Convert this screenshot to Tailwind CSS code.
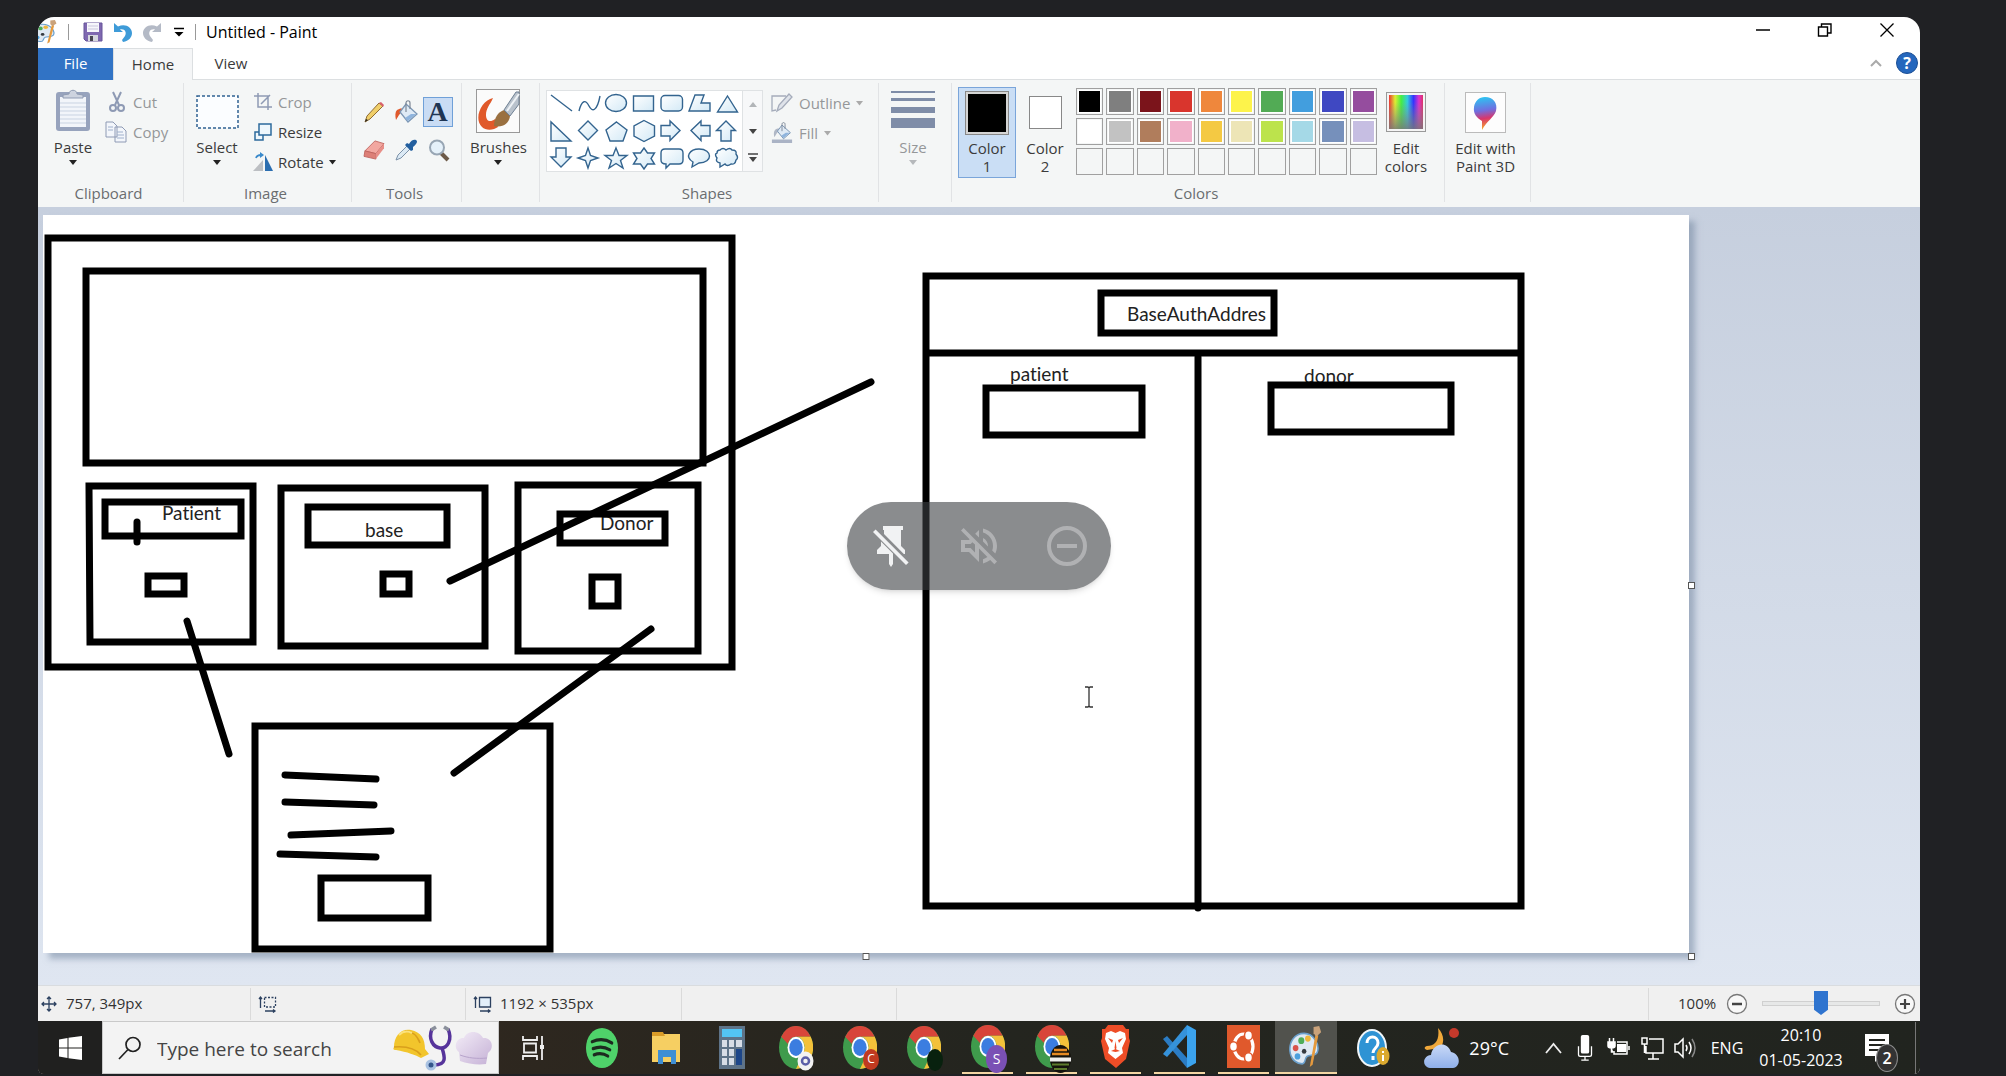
<!DOCTYPE html>
<html lang="en">
<head>
<meta charset="utf-8">
<title>Untitled - Paint</title>
<script src="https://cdn.jsdelivr.net/npm/@tailwindcss/browser@4"></script>
</head>
<body class="h-screen overflow-hidden bg-[#202124] pt-[17px] pr-[86px] pb-[2px] pl-[38px] font-['Open_Sans','Noto_Sans',sans-serif] text-sm text-[#3b3b3b]">

<svg class="absolute size-0" aria-hidden="true">
  <defs>
    <linearGradient id="shapeFill" x1="0" y1="0" x2="1" y2="1"><stop offset="0" stop-color="#fff"/><stop offset="1" stop-color="#d3e9f6"/></linearGradient>
    <linearGradient id="spectrum"><stop offset="0" stop-color="#e33"/><stop offset=".18" stop-color="#de3"/><stop offset=".36" stop-color="#4e4"/><stop offset=".54" stop-color="#3cd"/><stop offset=".72" stop-color="#33f"/><stop offset=".88" stop-color="#d3c"/><stop offset="1" stop-color="#d36"/></linearGradient>
    <linearGradient id="greyFade" x1="0" y1="0" x2="0" y2="1"><stop offset=".2" stop-color="#888" stop-opacity="0"/><stop offset="1" stop-color="#777" stop-opacity=".85"/></linearGradient>
    <linearGradient id="p3d" x1=".4" y1="0" x2=".5" y2="1"><stop offset="0" stop-color="#2cc5f2"/><stop offset=".4" stop-color="#6f6fe0"/><stop offset=".65" stop-color="#d8366c"/><stop offset="1" stop-color="#fbb324"/></linearGradient>
    <linearGradient id="cloud" x1="0" y1="0" x2="0" y2="1"><stop offset="0" stop-color="#c9d9f7"/><stop offset="1" stop-color="#8fb0ea"/></linearGradient>
    <linearGradient id="hat" x1="0" y1="0" x2="1" y2="1"><stop offset="0" stop-color="#f3ecf7"/><stop offset="1" stop-color="#c5b1d6"/></linearGradient>
    <symbol id="chrome" viewBox="0 0 48 48" preserveAspectRatio="none">
      <circle cx="24" cy="24" r="24" fill="#3f9b4c"/>
      <path d="M3.2 12A24 24 0 0 1 44.8 12H24A12 12 0 0 0 12.6 20z" fill="#d8453a"/>
      <path d="M44.800 12A24 24 0 0 1 24 48l10.400-18A12 12 0 0 0 24 12z" fill="#f3c13a"/>
      <circle cx="24" cy="24" r="12" fill="#fff"/><circle cx="24" cy="24" r="9.500" fill="#3b7de0"/>
    </symbol>
    <symbol id="palette" viewBox="0 0 36 40" preserveAspectRatio="none">
      <path d="M16 7C6 7 0 15 1 24s8 12 13 12c4 0 2-5 5-7s9 0 11-4c3-7-4-18-14-18z" fill="#dfe9f3" stroke="#6ba0cc" stroke-width="1.600"/>
      <circle cx="7" cy="21" r="3" fill="#d9534b"/><circle cx="13" cy="14" r="3.200" fill="#4fae5a"/><circle cx="20" cy="12" r="3" fill="#efb73c"/><circle cx="9" cy="29" r="3" fill="#4b9fdd"/><circle cx="16" cy="24" r="2.400" fill="#353a40"/>
      <path d="M28 8l3 1-6 28-3 2z" fill="#e59a3e"/><path d="M26 1l6-1 2 6-5 4-3-3z" fill="#caa27a"/>
    </symbol>
    <symbol id="bucket" viewBox="0 0 24 24">
      <path d="M3 10C1 12 1 16 2 20l3-5 5-6c-3-1-5 0-7 1z" fill="currentColor"/>
      <path d="M12 4l11 10-9 8L6 12z" fill="#dfeaf5" stroke="#7c97b5" stroke-width="1.300"/><path d="M12 12V3c0-3 4-3 4 0v6" fill="none" stroke="#7c8796" stroke-width="1.200"/><path d="M17 14l5 0-8 7-3-3z" fill="#8fb4dd"/>
    </symbol>
  </defs>
</svg>

<div class="flex h-full flex-col overflow-hidden rounded-t-2xl rounded-b-md bg-white">

  <!-- title bar -->
  <header class="flex h-[31px] shrink-0 items-center pb-[2px] text-black">
    <svg class="h-6 w-5" viewBox="10 0 26 40" preserveAspectRatio="none" aria-hidden="true"><use href="#palette" width="36" height="40"/></svg>
    <span class="ml-[10px] h-4 w-px bg-[#999]"></span>
    <button class="ml-[14px]" aria-label="Save"><svg width="20" height="20" viewBox="0 0 20 20"><path d="M1 1h18v18H3l-2-2z" fill="#7f68b0" stroke="#67549a"/><path d="M4 1h12v9H4z" fill="#f6f6fb"/><path d="M5 4h10M5 7h10" stroke="#c9c6dd"/><path d="M5 13h10v6H5z" fill="#d5d7de"/><path d="M7 14h3v5H7z" fill="#47454f"/></svg></button>
    <button class="ml-[10px]" aria-label="Undo"><svg width="20" height="20" viewBox="0 0 20 20"><path d="M1 1v9h9L7 7.500c5-1 7 3 5 6.500l-3 4 1 2c6-1 9-5 9-9 0-6-7-10-14-6.500z" fill="#3e9bd8"/></svg></button>
    <button class="ml-[9px]" aria-label="Redo"><svg width="20" height="20" viewBox="0 0 20 20"><path d="M19 1v9h-9l3-2.500c-5-1-7 3-5 6.500l3 4-1 2c-6-1-9-5-9-9 0-6 7-10 14-6.500z" fill="#b4bac6"/></svg></button>
    <button class="ml-[11px]" aria-label="Customize quick access toolbar"><svg width="12" height="10" viewBox="0 0 12 10"><path d="M1 1.500h10" stroke="#000" stroke-width="1.600"/><path d="M1.500 5h9L6 9.500z"/></svg></button>
    <span class="ml-[10px] h-4 w-px bg-[#999]"></span>
    <h1 class="ml-[10px] text-base">Untitled - Paint</h1>
    <div class="ml-auto flex h-full items-center pr-[2px] pb-1">
      <button class="flex w-[62px] justify-center" aria-label="Minimize"><svg width="16" height="16" viewBox="0 0 16 16"><path d="M1 8h14" stroke="#000" stroke-width="1.300"/></svg></button>
      <button class="flex w-[62px] justify-center" aria-label="Restore"><svg width="16" height="16" viewBox="0 0 16 16" fill="none" stroke="#000" stroke-width="1.400"><path d="M1.500 5h9v9h-9zM4.500 5V2h9.500v9h-3.500"/></svg></button>
      <button class="flex w-[62px] justify-center" aria-label="Close"><svg width="16" height="16" viewBox="0 0 16 16"><path d="M1.500 1.500l13 13M14.500 1.500l-13 13" stroke="#000" stroke-width="1.300"/></svg></button>
    </div>
  </header>

  <!-- ribbon tabs -->
  <nav class="flex h-8 shrink-0 items-stretch text-[15px]" aria-label="Ribbon tabs">
    <button class="w-[75px] bg-[#3173c5] text-white">File</button>
    <button class="w-20 border-x border-t border-[#dcdfe1] bg-[#f5f6f7]">Home</button>
    <button class="w-[76px] border-b border-[#dcdfe1]">View</button>
    <div class="flex flex-1 items-center justify-end gap-[14px] border-b border-[#dcdfe1] pr-[2px] pb-[2px]">
      <button aria-label="Minimize the ribbon"><svg width="12" height="8" viewBox="0 0 12 8"><path d="M1 7l5-5 5 5" fill="none" stroke="#aaa" stroke-width="2"/></svg></button>
      <button aria-label="Help" class="size-[22px] rounded-full border border-[#1c4f95] bg-[#2567bd] text-base leading-5 font-bold text-white">?</button>
    </div>
  </nav>

  <!-- ribbon -->
  <div class="flex h-[127px] shrink-0 bg-[#f4f6f6] pt-[3px] pb-[5px] text-[15px] leading-[18px]">
    <section class="flex w-[146px] flex-col border-r border-[#e1e3e5]" aria-label="Clipboard">
      <div class="flex flex-1 pt-[6px]">
        <button class="ml-[10px] flex w-[50px] flex-col items-center">
          <svg width="36" height="43" viewBox="0 0 36 43"><rect x="1" y="3" width="34" height="39" rx="3" fill="#97a3bd"/><path d="M5 8h26v30H5z" fill="#f2f5fa"/><path d="M5 14h26M5 18h26M5 22h26M5 26h26M5 30h26M5 34h26" stroke="#c9d3e2"/><path d="M8 9V6l6-1c0-5 8-5 8 0l6 1v3z" fill="#cdd3df" stroke="#8f9bb2"/></svg>
          <span class="mt-[6px]">Paste</span>
          <svg class="mt-1" width="8" height="5"><path d="M0 0h8L4 5z" fill="#222"/></svg>
        </button>
        <div class="ml-[7px] flex flex-col gap-1 text-[#949799]">
          <button class="flex h-[26px] items-center gap-1"><svg width="24" height="22" viewBox="0 0 24 22" fill="none" stroke="#8e9ab4" stroke-width="2"><path d="M8 1l6 13M16 1l-6 13"/><circle cx="8" cy="17" r="3"/><circle cx="16" cy="17" r="3"/></svg>Cut</button>
          <button class="flex h-[26px] items-center gap-1"><svg width="24" height="22" viewBox="0 0 24 22" fill="#f3f6fb" stroke="#8e9ab4"><path d="M1 1h7l4 4v11H1zM10 6h7l4 4v11H10z"/><path d="M3 6h5M3 9h5M12 11h6M12 14h7M12 17h7" stroke="#9fb0cc"/></svg>Copy</button>
        </div>
      </div>
      <h2 class="pr-1 text-center text-[#6a6d70]">Clipboard</h2>
    </section>

    <section class="flex w-[168px] flex-col border-r border-[#e1e3e5]" aria-label="Image">
      <div class="flex flex-1 pt-[6px]">
        <button class="ml-[7px] flex w-[52px] flex-col items-center pt-[6px]">
          <svg width="43" height="34"><rect x="1" y="1" width="41" height="32" fill="#fbfdff" stroke="#2f6192" stroke-width="1.500" stroke-dasharray="3 2"/></svg>
          <span class="mt-[9px]">Select</span>
          <svg class="mt-1" width="8" height="5"><path d="M0 0h8L4 5z" fill="#222"/></svg>
        </button>
        <div class="ml-[10px] flex flex-col gap-1">
          <button class="flex h-[26px] items-center gap-[5px] text-[#949799]"><svg width="20" height="20" viewBox="0 0 20 20" fill="none" stroke="#8e9ab4" stroke-width="1.500"><path d="M5 1v14h14M1 4h14v14M8 12l9-9"/></svg>Crop</button>
          <button class="flex h-[26px] items-center gap-[5px]"><svg width="20" height="20" viewBox="0 0 20 20" fill="#eff7fc" stroke="#2c6a9c" stroke-width="1.500"><path d="M2 10h8v8H2z"/><path d="M6 2h12v11H6z"/></svg>Resize</button>
          <button class="flex h-[26px] items-center gap-[5px]"><svg width="20" height="20" viewBox="0 0 20 20"><path d="M10 8v11H0z" fill="#bcbfc3"/><path d="M12 3l8 16h-8z" fill="#2b6eb0"/><path d="M3 6c1-3 3-3 5-3" fill="none" stroke="#3a8acb" stroke-width="1.800"/><path d="M7 0l4 3-4 3z" fill="#3a8acb"/></svg>Rotate <svg width="7" height="5"><path d="M0 0h7L3.500 4.500z" fill="#222"/></svg></button>
        </div>
      </div>
      <h2 class="pr-1 text-center text-[#6a6d70]">Image</h2>
    </section>

    <section class="flex w-[110px] flex-col border-r border-[#e1e3e5]" aria-label="Tools">
      <div class="grid flex-1 grid-cols-3 content-start gap-y-2 px-[6px] pt-[14px]">
        <button class="grid h-[30px] place-items-center" aria-label="Pencil"><svg width="21" height="22" viewBox="0 0 21 22"><path d="M1 21l2-6L15 2l4 3L6 18z" fill="#f0cf6a" stroke="#8f6c33"/><path d="M15 2l2-1 3 3-1 2z" fill="#d9606c"/><path d="M1 21l1-3 2 1z" fill="#222"/></svg></button>
        <button class="grid h-[30px] place-items-center text-[#e0592c]" aria-label="Fill with color"><svg width="24" height="24"><use href="#bucket"/></svg></button>
        <button class="size-[30px] border border-[#6fa0d8] bg-[#c9dcf4] font-['Liberation_Serif',serif] text-[28px] leading-7 font-bold text-[#1f3553]" aria-label="Text">A</button>
        <button class="grid h-[30px] place-items-center" aria-label="Eraser"><svg width="22" height="20" viewBox="0 0 24 22"><path d="M13 1l10 3-9 11-12-3z" fill="#f2a7a0" stroke="#c0655f"/><path d="M2 12l12 3v6L1 18z" fill="#dd7f77" stroke="#c0655f"/><path d="M14 15l9-11v5l-9 12z" fill="#e88f88"/></svg></button>
        <button class="grid h-[30px] place-items-center" aria-label="Color picker"><svg width="22" height="22" viewBox="0 0 22 22"><path d="M1 21l2-5 9-9 3 3-9 9z" fill="#dceaf5" stroke="#7c92a8"/><path d="M10 6l2-2 2 1c2-4 5-5 7-4s1 4-3 7l0 3-2 1z" fill="#225f9f"/></svg></button>
        <button class="grid h-[30px] place-items-center" aria-label="Magnifier"><svg width="22" height="23" viewBox="0 0 22 23"><path d="M13 14l7 7" stroke="#6d5a48" stroke-width="4"/><circle cx="9" cy="8.500" r="7" fill="#e5f1fa" stroke="#98a6b4" stroke-width="2"/></svg></button>
      </div>
      <h2 class="pr-1 text-center text-[#6a6d70]">Tools</h2>
    </section>

    <section class="flex w-[78px] justify-center border-r border-[#e1e3e5] pt-[6px] pr-1" aria-label="Brushes">
      <button class="flex flex-col items-center self-start">
        <svg width="44" height="44" viewBox="0 0 44 44"><rect x=".5" y=".5" width="43" height="43" fill="#fbfbfb" stroke="#999"/><path d="M17 9C6 11-3 29 6 38c4 4 12 3 16 0l-3-8c-5 4-9 2-9-4 0-7 4-10 7-17z" fill="#e0592a"/><path d="M18 37c0-8 4-14 10-16l6 6c-1 8-8 12-16 10z" fill="#9a7040"/><path d="M28 21L40 3h3v12l-9 12z" fill="#b9c2cc" stroke="#6d7f93"/><path d="M31 22L43 5" stroke="#eef2f6" stroke-width="2"/></svg>
        <span class="mt-[5px]">Brushes</span>
        <svg class="mt-1" width="8" height="5"><path d="M0 0h8L4 5z" fill="#222"/></svg>
      </button>
    </section>

    <section class="flex w-[339px] flex-col border-r border-[#e1e3e5]" aria-label="Shapes">
      <div class="flex flex-1 pt-[7px] pl-[6px]">
        <div class="flex h-[82px] w-[217px] border border-[#dfe2e4] bg-white">
          <svg class="flex-1" width="195" height="80" viewBox="0 0 195 80" fill="url(#shapeFill)" stroke="#33648f" stroke-width="1.400" role="img" aria-label="Shape gallery">
            <path d="M4 4l21 16"/><path d="M32 20c3-12 7-11 10-5s8 6 11-10" fill="none"/><ellipse cx="69" cy="12" rx="10.500" ry="8.500"/><path d="M86.500 5h20v15h-20z"/><rect x="114" y="4.500" width="21.500" height="15.500" rx="4"/><path d="M148 4h9l-3 8h9v8h-21z"/><path d="M180.500 5l10 16h-20z"/>
            <path d="M4 31v19h20z"/><path d="M41 30l9.500 9.500L41 49l-9.500-9.500z"/><path d="M69.500 31L80 39l-4 11H63l-4-11z"/><path d="M97 29.500l10.500 5.500v10L97 50.500 87 45V35z"/><path d="M114 34.500h9V30l10 9.500-10 10V45h-9z"/><path d="M163 34.500h-9V30l-10 9.500 10 10V45h9z"/><path d="M179 30l9.500 9.500H184V50h-10V39.500h-4.500z"/>
            <path d="M9 57h10v9h5L14 76 4 66h5z"/><path d="M41 57l2.500 7.500L51 67l-7.500 2.500L41 77l-2.500-7.500L31 67l7.500-2.500z"/><path d="M69 57l3 7.500h8l-6.500 5 2.500 7.500-7-4.500-7 4.500 2.500-7.500-6.500-5h8z"/><path d="M97 57l3.500 5h7L104 67.500l3.500 5.500h-7L97 78l-3.500-5h-7l3.500-5.500-3.500-5.500h7z"/><path d="M118 58h14q4 0 4 4v7q0 4-4 4h-9l-4 4v-4q-5 0-5-4v-7q0-4 4-4z"/><path d="M152 58c14 0 14 14 0 14l-7 4 1-5c-9-5-3-13 6-13z"/><path d="M173 59q3-3 6 0 4-3 6 0 5 0 4 4 3 4 0 6-1 5-5 4-4 3-6 0l-5 3 0-4q-5-1-3-5-3-4 0-5 0-3 3-3z"/>
          </svg>
          <div class="flex w-5 flex-col border-l border-[#dfe2e4] bg-[#f7f8f9]">
            <button class="grid flex-1 place-items-center" aria-label="Scroll shapes up"><svg width="8" height="5"><path d="M0 5h8L4 0z" fill="#b2b5b8"/></svg></button>
            <button class="grid flex-1 place-items-center" aria-label="Scroll shapes down"><svg width="8" height="5"><path d="M0 0h8L4 5z" fill="#444"/></svg></button>
            <button class="grid flex-1 place-items-center" aria-label="More shapes"><svg width="10" height="9"><path d="M0 1h10" stroke="#444" stroke-width="1.500"/><path d="M1 4h8L5 9z" fill="#444"/></svg></button>
          </div>
        </div>
        <div class="ml-2 flex flex-col gap-1 text-[#949799]">
          <button class="flex h-[26px] items-center gap-[6px]"><svg width="22" height="22" viewBox="0 0 22 22" fill="none" stroke="#a5acbb" stroke-width="1.300"><path d="M15 4H1v15l4-1"/><path d="M6 19l2-6L18 2l3 3L11 16z" fill="#dfe3ea"/></svg>Outline <svg width="7" height="5"><path d="M0 0h7L3.500 4.500z" fill="#aaa"/></svg></button>
          <button class="flex h-[26px] items-center gap-[6px] text-[#b0b8c6]"><svg width="22" height="22" viewBox="0 0 24 24"><path d="M1 19h22v4H1z" fill="#aab3c5"/><use href="#bucket" width="22" height="20" x="1"/></svg><span class="text-[#949799]">Fill</span> <svg width="7" height="5"><path d="M0 0h7L3.500 4.500z" fill="#aaa"/></svg></button>
        </div>
      </div>
      <h2 class="pr-1 text-center text-[#6a6d70]">Shapes</h2>
    </section>

    <section class="flex w-[73px] justify-center border-r border-[#e1e3e5] pt-[6px] pr-1" aria-label="Size">
      <button class="flex flex-col items-center self-start text-[#949799]">
        <svg width="44" height="44" fill="#7f8da8"><path d="M0 2h44v2H0zM0 9h44v3H0zM0 18h44v6H0zM0 29h44v10H0z"/></svg>
        <span class="mt-[5px]">Size</span>
        <svg class="mt-1" width="8" height="5"><path d="M0 0h8L4 5z" fill="#b5b8bb"/></svg>
      </button>
    </section>

    <section class="flex w-[493px] flex-col border-r border-[#e1e3e5]" aria-label="Colors">
      <div class="flex flex-1 items-start pt-1 pl-[6px]">
        <button class="flex h-[91px] w-[58px] flex-col items-center border border-[#7aa5da] bg-[#cadef5] pt-[3px]">
          <span class="size-11 border border-[#888] bg-black outline-2 -outline-offset-3 outline-[#d5d5d5]"></span>
          <span class="mt-1">Color<br>1</span>
        </button>
        <button class="flex w-[58px] flex-col items-center pt-[9px]">
          <span class="h-[33px] w-[33px] border border-[#888] bg-white"></span>
          <span class="mt-[10px]">Color<br>2</span>
        </button>
        <div id="palette-grid" class="mt-px ml-[2px] grid w-[301px] grid-cols-10 gap-[3px]"></div>
        <button class="ml-[2px] flex w-[54px] flex-col items-center pt-[5px]">
          <svg width="40" height="40"><rect x=".5" y=".5" width="39" height="39" fill="#f4f4f4" stroke="#999"/><path d="M3 3h34v34H3z" fill="url(#spectrum)"/><path d="M3 3h34v34H3z" fill="url(#greyFade)"/></svg>
          <span class="mt-[7px]">Edit<br>colors</span>
        </button>
      </div>
      <h2 class="pr-1 text-center text-[#6a6d70]">Colors</h2>
    </section>

    <section class="flex w-[86px] justify-center border-r border-[#e1e3e5] pt-[9px] pr-1" aria-label="Paint 3D">
      <button class="flex flex-col items-center self-start">
        <svg width="41" height="41"><rect x=".5" y=".5" width="40" height="40" fill="#fdfdfd" stroke="#bbb"/><path d="M20 5c8 0 13 6 11 14-2 6-9 10-14 19l0-9C12 26 8 22 9 15c1-6 5-10 11-10z" fill="url(#p3d)"/></svg>
        <span class="mt-[6px]">Edit with<br>Paint 3D</span>
      </button>
    </section>
  </div>

  <!-- work area -->
  <main class="relative flex min-h-0 flex-1 flex-col overflow-hidden bg-linear-to-b from-[#c6cfde] to-[#dfe6f1] pt-2 pl-[5px]">
    <div class="relative h-[738px] w-[1646px] shrink-0 bg-white shadow-[6px_6px_6px_rgba(110,130,155,0.5)]">
      <svg class="block" width="1646" height="738" viewBox="43 215 1646 738" role="img" aria-label="Wireframe sketch">
        <g class="text-[19px] [font-variant-ligatures:none]" font-family="Lato, sans-serif" fill="#222">
          <text x="162" y="520">Patient</text>
          <text x="365" y="537">base</text>
          <text x="600" y="530">Donor</text>
          <text x="1127" y="321">BaseAuthAddres</text>
          <text x="1010" y="381">patient</text>
          <text x="1304" y="383">donor</text>
        </g>
        <g fill="none" stroke="#000" stroke-width="7">
          <path d="M48 238h684v429H48zM86 271h617v192H86z"/>
          <path d="M89 486h164v156H90zM105 502h136v34H105zM148 576h36v18h-36z"/>
          <path d="M281 488h204v158H281zM308 507h139v38H308zM383 574h26v20h-26z"/>
          <path d="M518 485h180v166H518zM560 514h105v29H560zM592 577h26v29h-26z"/>
          <path d="M255 726h295v223H255zM321 878h107v40H321z"/>
          <path d="M926 276h595v630H926zM1101 293h173v40h-173zM926 353h595M986 388h156v47H986zM1271 385h180v47h-180z"/>
        </g>
        <g fill="none" stroke="#000" stroke-width="7" stroke-linecap="round">
          <path d="M1198 357v551M137 522v20M450 581L871 382M187 621l42 133M651 629L454 773"/>
          <path d="M285 775L376 779M285 802L374 805M291 835L391 831M280 854L376 857"/>
        </g>
        <path d="M1085 687h3l1 1 1-1h3M1089 688v18M1085 707h3l1-1 1 1h3" fill="none" stroke="#333" stroke-width="1.300"/>
      </svg>
      <span class="absolute top-[367px] -right-[6px] size-[7px] border border-[#555] bg-white"></span>
      <span class="absolute -right-[6px] -bottom-[7px] size-[7px] border border-[#555] bg-white"></span>
      <span class="absolute -bottom-[7px] left-1/2 size-[7px] -translate-x-1/2 border border-[#555] bg-white"></span>
    </div>

    <!-- call controls floating over the shared screen -->
    <div class="absolute top-[295px] left-[809px] flex h-[88px] w-[264px] items-center justify-around rounded-full bg-[#3c4043]/60 shadow-md">
      <button aria-label="Unpin"><svg width="48" height="48" viewBox="0 0 24 24" fill="#f1f2f3"><path d="M8 2h10v2h-1v8l2 2v2h-.6L8.500 6V4H8zM7 9.700V12l-2 2v2h6v5l1 1.500 1-1.500v-5.200z"/><path d="M3 5l1.300-1.300L20.800 20.200l-1.300 1.300z"/></svg></button>
      <button aria-label="Mute"><svg width="48" height="48" viewBox="0 0 24 24" fill="#b0b1b3"><path d="M4.300 3L3 4.300 7.300 8.600 7 9H3v6h4l5 5v-6.700l4.200 4.200c-.7.500-1.400.9-2.200 1.100v2.100c1.300-.3 2.600-.9 3.600-1.700l2.100 2.100 1.300-1.300zM10 15.200L7.800 13H5v-2h2.800l.9-.9L10 11.300zM19 12c0 .8-.1 1.600-.4 2.300l1.500 1.500c.6-1.100.9-2.400.9-3.800 0-4.300-3-7.900-7-8.800v2.100c2.900.9 5 3.500 5 6.700zM12 4L10.100 5.900 12 7.800zM16.500 12c0-1.800-1-3.300-2.500-4v1.800l2.500 2.500z"/></svg></button>
      <button aria-label="Remove"><svg width="48" height="48" viewBox="0 0 24 24" fill="none" stroke="#b0b1b3" stroke-width="2"><circle cx="12" cy="12" r="9"/><path d="M7 12h10"/></svg></button>
    </div>
  </main>

  <!-- status bar -->
  <footer class="flex h-9 shrink-0 items-center border-t border-[#d9dcdf] bg-[#f0f0f0] text-[15px] text-[#333]">
    <div class="flex h-8 w-[213px] items-center gap-[9px] border-r border-[#dadada] pl-[3px]"><svg width="16" height="16" viewBox="0 0 16 16" fill="none" stroke="#2c4160" stroke-width="1.300"><path d="M8 1v14M1 8h14M6 3l2-2 2 2M6 13l2 2 2-2M3 6L1 8l2 2M13 6l2 2-2 2"/></svg>757, 349px</div>
    <div class="flex h-8 w-[215px] items-center border-r border-[#dadada] pl-[7px]"><svg width="19" height="18" viewBox="0 0 19 18" fill="none" stroke="#2c4160" stroke-width="1.300"><path d="M2.500 13V2M1 4l1.500-2L4 4M7 16h10M15 14.500l2 1.500-2 1.500"/><path d="M6.500 2.500h11v9.500h-11z" stroke-dasharray="2 1.500"/></svg></div>
    <div class="flex h-8 w-[216px] items-center gap-[8px] border-r border-[#dadada] pl-[7px]"><svg width="19" height="18" viewBox="0 0 19 18" fill="none" stroke="#2c4160" stroke-width="1.300"><path d="M2.500 13V2M1 4l1.500-2L4 4M7 16h10M15 14.500l2 1.500-2 1.500"/><path d="M6.500 2.500h11v9.500h-11z" fill="#e2effa"/></svg>1192 × 535px</div>
    <div class="h-8 w-[215px] border-r border-[#dadada]"></div>
    <div class="ml-auto flex h-8 w-[272px] items-center border-l border-[#dadada] pr-1 pl-[29px]">
      <label for="zoom" class="w-12">100%</label>
      <button aria-label="Zoom out"><svg width="22" height="22" viewBox="0 0 22 22"><circle cx="11" cy="11" r="9.500" fill="#f8f8f8" stroke="#777" stroke-width="1.300"/><path d="M6 11h10" stroke="#444" stroke-width="2.500"/></svg></button>
      <input id="zoom" type="range" value="50" class="mx-[14px] h-6 min-w-0 flex-1 appearance-none bg-transparent [&::-webkit-slider-runnable-track]:h-[5px] [&::-webkit-slider-runnable-track]:border [&::-webkit-slider-runnable-track]:border-[#d0d0d0] [&::-webkit-slider-runnable-track]:bg-[#e7e8e8] [&::-webkit-slider-thumb]:-mt-[11px] [&::-webkit-slider-thumb]:h-6 [&::-webkit-slider-thumb]:w-[14px] [&::-webkit-slider-thumb]:appearance-none [&::-webkit-slider-thumb]:bg-[#2f74cf] [&::-webkit-slider-thumb]:[clip-path:polygon(0_0,100%_0,100%_78%,50%_100%,0_78%)]">
      <button aria-label="Zoom in"><svg width="22" height="22" viewBox="0 0 22 22"><circle cx="11" cy="11" r="9.500" fill="#f8f8f8" stroke="#777" stroke-width="1.300"/><path d="M6 11h10M11 6v10" stroke="#444" stroke-width="2.200"/></svg></button>
    </div>
  </footer>

  <!-- taskbar -->
  <div class="flex h-[53px] shrink-0 items-stretch bg-linear-to-r from-[#37291f] via-[#24251f] to-[#21241f] text-[17px] text-white">
    <button class="grid w-16 place-items-center bg-[#20201f]" aria-label="Start"><svg width="24" height="24" viewBox="0 0 24 24" fill="#fff"><path d="M1 3.500l8.500-1.500v9.500H1zM10.500 1.800L24 0v11.500H10.500zM1 12.500h8.500V22L1 20.500zM10.500 12.500H24V24l-13.500-1.800z"/></svg></button>
    <label class="flex w-[397px] items-center border border-[#c9c9c9] bg-[#f3f3f3]">
      <svg class="ml-[15px]" width="24" height="24" viewBox="0 0 24 24" fill="none" stroke="#222" stroke-width="1.700"><circle cx="15" cy="8.500" r="7"/><path d="M10 13.500L1 23"/></svg>
      <input type="text" placeholder="Type here to search" class="ml-[15px] min-w-0 flex-1 bg-transparent pt-1 text-[19px] text-[#333] placeholder:text-[#444]">
      <svg width="106" height="48" viewBox="0 0 106 48">
        <path d="M2 23C2 12 9 4 19 6c10 2 14 9 14 19l4 5-8 4c-5-3-14-6-25-8-3 0-3-1-2-3z" fill="#f2c52c"/><path d="M13 7c6 0 12 4 15 12M2 23c12-1 22 2 27 8" fill="none" stroke="#d99f1c" stroke-width="1.600"/><path d="M7 11c4-4 9-4 13-2" fill="none" stroke="#fbe27c" stroke-width="2"/>
        <path d="M40 5c-4 10 1 18 8 19s13-8 8-19M50 24c3 9 5 17-8 17" fill="none" stroke="#56349b" stroke-width="3.500"/><path d="M39 6l5-3M57 6l-5-3" stroke="#8a8f9b" stroke-width="3.500"/><circle cx="39" cy="41" r="5.500" fill="#a9c2e2"/><circle cx="39" cy="41" r="2.500" fill="#33568b"/>
        <path d="M68 37l-1-9c-6-4-3-15 5-14 3-8 15-8 19 0 9-1 12 10 5 15l-2 11c-8 1-18 0-26-3z" fill="url(#hat)"/><path d="M68 31c8 3 17 4 27 3" fill="none" stroke="#b7a3cb"/>
      </svg>
    </label>
    <nav class="flex" aria-label="Taskbar apps">
      <button class="grid w-[69px] place-items-center" aria-label="Task view"><svg width="25" height="26" viewBox="0 0 25 26" fill="none" stroke="#eee" stroke-width="1.800"><path d="M2 1v4h14V1M2 25v-4h14v4M3 8.500h12v9H3zM21 1v24"/><path d="M19 10h4v4h-4z" fill="#eee" stroke="none"/></svg></button>
      <button class="ml-[2px] grid w-16 place-items-center" aria-label="Spotify"><svg width="32" height="40" viewBox="0 0 32 32" preserveAspectRatio="none"><circle cx="16" cy="16" r="16" fill="#4fd26a"/><path d="M6 11c7-2.500 14-2 20 1M7 16.500c6-2 12-1.500 17 1M8 21.500c5-1.500 10-1 14 1" fill="none" stroke="#1d2a1f" stroke-width="2.600" stroke-linecap="round"/></svg></button>
      <button class="grid w-16 place-items-center" aria-label="File Explorer"><svg width="31" height="32" viewBox="0 0 31 32"><path d="M1 2h28v28H1z" fill="#f6cf62"/><path d="M1 0h11l2 4H1z" fill="#d99c28"/><path d="M7 32V18h18v14h-5v-7h-8v7z" fill="#3f8fd4"/></svg></button>
      <button class="ml-[2px] grid w-16 place-items-center" aria-label="Calculator"><svg width="26" height="43" viewBox="0 0 26 43"><path d="M0 0h26v43H0z" fill="#5e7388"/><path d="M3 3h20v8H3z" fill="#53c4f3"/><path d="M3 14h5v7H3zM10 14h5v7h-5zM17 14h6v7h-6zM3 23h5v7H3zM10 23h5v7h-5zM3 32h5v7H3zM10 32h5v7h-5z" fill="#d7dde6"/><path d="M17 23h6v16h-6z" fill="#1d4689"/></svg></button>
      <button class="relative grid w-16 place-items-center" aria-label="Chrome"><svg width="34" height="43"><use href="#chrome"/></svg><svg class="absolute top-[30px] left-[33px]" width="17" height="20" viewBox="0 0 17 20"><ellipse cx="8.500" cy="10" rx="8" ry="9.500" fill="#f2f2f2"/><circle cx="8.500" cy="10" r="3.500" fill="none" stroke="#5b5fa8" stroke-width="2.500"/></svg></button>
      <button class="relative grid w-16 place-items-center" aria-label="Chrome, profile C"><svg width="34" height="43"><use href="#chrome"/></svg><span class="absolute top-7 left-[35px] h-[21px] w-4 rounded-[50%] bg-[#c03a20] text-center text-xs leading-5">C</span></button>
      <button class="relative grid w-16 place-items-center" aria-label="Chrome"><svg width="34" height="43"><use href="#chrome"/></svg><span class="absolute top-7 left-[35px] h-[22px] w-4 rounded-[50%] bg-[#08210e]"></span></button>
      <div class="flex gap-[13px] px-[6px]">
        <button class="relative grid w-[51px] place-items-center border-b-2 border-[#f3d6a4]" aria-label="Chrome, profile S"><svg width="34" height="43"><use href="#chrome"/></svg><span class="absolute top-[24px] left-6 h-7 w-[21px] rounded-[50%] bg-[#7a50b5] text-center text-sm leading-[27px]">S</span></button>
        <button class="relative grid w-[51px] place-items-center border-b-2 border-[#f3d6a4]" aria-label="Chrome"><svg width="34" height="43"><use href="#chrome"/></svg><svg class="absolute top-[24px] left-6" width="21" height="28" viewBox="0 0 21 28"><ellipse cx="10.500" cy="14" rx="10.500" ry="14" fill="#14120d"/><path d="M4 5h13M2 9h17" stroke="#e58a24" stroke-width="2.500"/><path d="M0 14.500h21" stroke="#eee" stroke-width="4"/><path d="M2 19.500h17M4 24h13" stroke="#5d7a2c" stroke-width="1.800"/></svg></button>
        <button class="grid w-[51px] place-items-center border-b-2 border-[#f3d6a4]" aria-label="Brave"><svg width="29" height="43" viewBox="0 0 29 43"><path d="M7 0h15l3 4h3l0 9 1 3-4 18-10 9L4 34 0 16l1-3V4h3z" fill="#ee4d27"/><path d="M5 8l5-2 4.500 2L19 6l5 2 1 6-4 9 1 5-7.500 6L7 28l1-5-4-9z" fill="#fff"/><path d="M7 13l5 2-1 3zM22 13l-5 2 1 3zM14.500 16l1 7-1 2-1-2zM10 26l4.500-2 4.500 2-4.500 1z" fill="#ee4d27"/></svg></button>
        <button class="grid w-[51px] place-items-center border-b-2 border-[#f3d6a4]" aria-label="Visual Studio Code"><svg width="33" height="43" viewBox="0 0 33 43"><path d="M0 14l4-3 20 22v10z" fill="#2b7cc4"/><path d="M0 29l4 3L24 10V0z" fill="#3592da"/><path d="M24 0l9 5v33l-9 5z" fill="#3ba3ee"/></svg></button>
        <button class="grid w-[51px] place-items-center border-b-2 border-[#f3d6a4]" aria-label="Ubuntu"><svg width="33" height="43" viewBox="0 0 33 43"><path d="M0 0h33v43H0z" fill="#e0592c"/><ellipse cx="16.500" cy="21.500" rx="9.500" ry="12.500" fill="none" stroke="#fff" stroke-width="3.200"/><g fill="#fff" stroke="#e0592c" stroke-width="1.500"><ellipse cx="6.500" cy="21.500" rx="4" ry="4.800"/><ellipse cx="21.500" cy="10.500" rx="4" ry="4.800"/><ellipse cx="21.500" cy="32.500" rx="4" ry="4.800"/></g></svg></button>
      </div>
      <button class="grid w-[62px] place-items-center border-b-2 border-[#f3d6a4] bg-[#51524d]" aria-label="Paint"><svg width="34" height="42"><use href="#palette"/></svg></button>
      <button class="relative grid w-[72px] place-items-center" aria-label="Get help"><svg width="33" height="38" viewBox="0 0 33 38"><ellipse cx="15" cy="19" rx="14" ry="18" fill="#2e93d4" stroke="#f0f6fa" stroke-width="2"/><path d="M10 14c0-8 11-8 11 0 0 5-5 5-5 10M16 27v4" fill="none" stroke="#fff" stroke-width="3"/><ellipse cx="26" cy="27" rx="6.500" ry="9" fill="#dba92f"/><path d="M26 26v6M26 22v2" stroke="#fff" stroke-width="2"/></svg></button>
    </nav>
    <div class="ml-auto flex items-center pr-1">
      <button class="mr-3 flex items-center gap-[10px] text-lg"><svg width="35" height="42" viewBox="0 0 35 42"><path d="M14 1c6 6 7 15 2 20l-13 2c-4-1-2-4 0-4 8 0 13-6 11-18z" fill="#f0a83a"/><circle cx="30" cy="6" r="5" fill="#c4392b"/><path d="M6 41c-8-1-8-12 1-13 1-10 15-16 20-3 10 2 10 15 2 16z" fill="url(#cloud)"/></svg>29°C</button>
      <button class="ml-4 flex w-8 justify-center" aria-label="Show hidden icons"><svg width="17" height="14" viewBox="0 0 17 14"><path d="M1 12l7.500-9 7.500 9" fill="none" stroke="#eee" stroke-width="1.800"/></svg></button>
      <button class="flex w-8 justify-center" aria-label="Microphone"><svg width="16" height="26" viewBox="0 0 16 28"><rect x="3.500" y="0" width="9" height="20" rx="2" fill="#fff"/><path d="M1 12v9q0 2 2 2h10q2 0 2-2v-9M8 23v4M4 27h8" fill="none" stroke="#fff" stroke-width="1.400"/></svg></button>
      <button class="flex w-[34px] justify-center" aria-label="Battery"><svg width="23" height="20" viewBox="0 0 23 20" fill="none" stroke="#fff" stroke-width="1.500"><path d="M10 4h10v12H7v-3M22 8v4"/><path d="M2.500 0v4M6.500 0v4" /><path d="M1 4h7v4q0 2-3.500 2Q1 10 1 8zM4.500 10v4h2" fill="#fff"/><path d="M10 6h9v8H10z" fill="#fff" stroke="none"/></svg></button>
      <button class="flex w-[34px] justify-center" aria-label="Network"><svg width="23" height="24" viewBox="0 0 23 24" fill="none" stroke="#fff" stroke-width="1.500"><path d="M8 3h14v14H5v-7M1 2h5v6H1zM3.500 8v9M12 17v6M7 23h11"/></svg></button>
      <button class="flex w-[33px] justify-center" aria-label="Volume"><svg width="23" height="24" viewBox="0 0 23 24" fill="none" stroke="#fff" stroke-width="1.500"><path d="M1 8h3l5-5v18l-5-5H1zM12 9q2 3 0 6M15 6q4 6 0 12"/><path d="M18 3q6 9 0 18" stroke="#888"/></svg></button>
      <button class="w-[50px] text-base">ENG</button>
      <button class="w-[98px] text-center text-base leading-[25px]">20:10<br>01-05-2023</button>
      <button class="relative flex w-[66px] justify-center border-r border-[#777] py-3 pr-3" aria-label="Notifications, 2 new"><svg width="24" height="28" viewBox="0 0 24 28"><path d="M0 0h24v22h-8l-6 6v-6H0z" fill="#fff"/><path d="M4 6h16M4 11h16M4 16h10" stroke="#22241f" stroke-width="1.800"/></svg><span class="absolute top-[22px] left-[26px] h-7 w-[22px] rounded-[50%] border border-[#8a8a8a] bg-[#333] text-center text-base leading-[26px] font-semibold">2</span></button>
    </div>
  </div>
</div>

<script>
  const colors = [
    '#000000', '#7f7f7f', '#7b141b', '#d9352d', '#ef873c', '#fdf34b', '#52ab55', '#429ede', '#3f48c2', '#954d9e',
    '#ffffff', '#c2c2c2', '#b07d5c', '#f1b1ca', '#f4c943', '#ede5b6', '#bce34c', '#a5d9e7', '#7690bb', '#c6bee2',
  ];
  const grid = document.getElementById('palette-grid');
  for (let i = 0; i < 30; i++) {
    const swatch = document.createElement('button');
    swatch.className = 'h-[27px] border border-[#a0a0a0] p-px';
    swatch.setAttribute('aria-label', colors[i] || 'Empty color');
    if (colors[i]) {
      const fill = document.createElement('span');
      fill.className = 'block h-full border border-white';
      fill.style.backgroundColor = colors[i];
      swatch.append(fill);
    }
    grid.append(swatch);
  }
</script>
</body>
</html>
